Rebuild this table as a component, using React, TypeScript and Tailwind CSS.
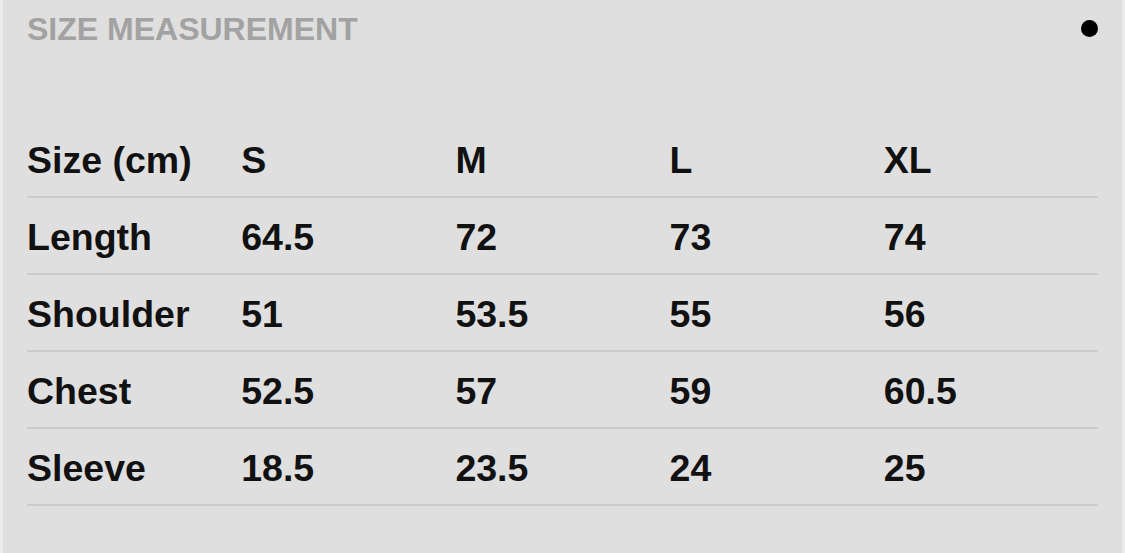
const rows: string[][] = [
  ["Size (cm)", "S", "M", "L", "XL"],
  ["Length", "64.5", "72", "73", "74"],
  ["Shoulder", "51", "53.5", "55", "56"],
  ["Chest", "52.5", "57", "59", "60.5"],
  ["Sleeve", "18.5", "23.5", "24", "25"],
];

export default function App() {
  return (
    <div className="h-[553px] w-full bg-[#ececec] px-[3px] font-['Liberation_Sans',Arial,sans-serif]">
      <div className="h-full bg-[#dfdfdf] px-[24px]">
        <div className="flex items-start justify-between pt-[13px]">
          <h2 className="text-[32px] font-bold leading-none text-[#a2a2a2]">SIZE MEASUREMENT</h2>
          <span className="mt-[7px] h-[17px] w-[17px] rounded-full bg-black" />
        </div>

        <div className="mt-[76px]">
          {rows.map((row, i) => (
            <div
              key={i}
              className="grid h-[77px] grid-cols-5 items-center border-b-2 border-[#cbcbcb] pt-[5px]"
            >
              {row.map((cell, j) => (
                <span key={j} className="text-[37.5px] font-bold leading-none text-[#111]">
                  {cell}
                </span>
              ))}
            </div>
          ))}
        </div>
      </div>
    </div>
  );
}
